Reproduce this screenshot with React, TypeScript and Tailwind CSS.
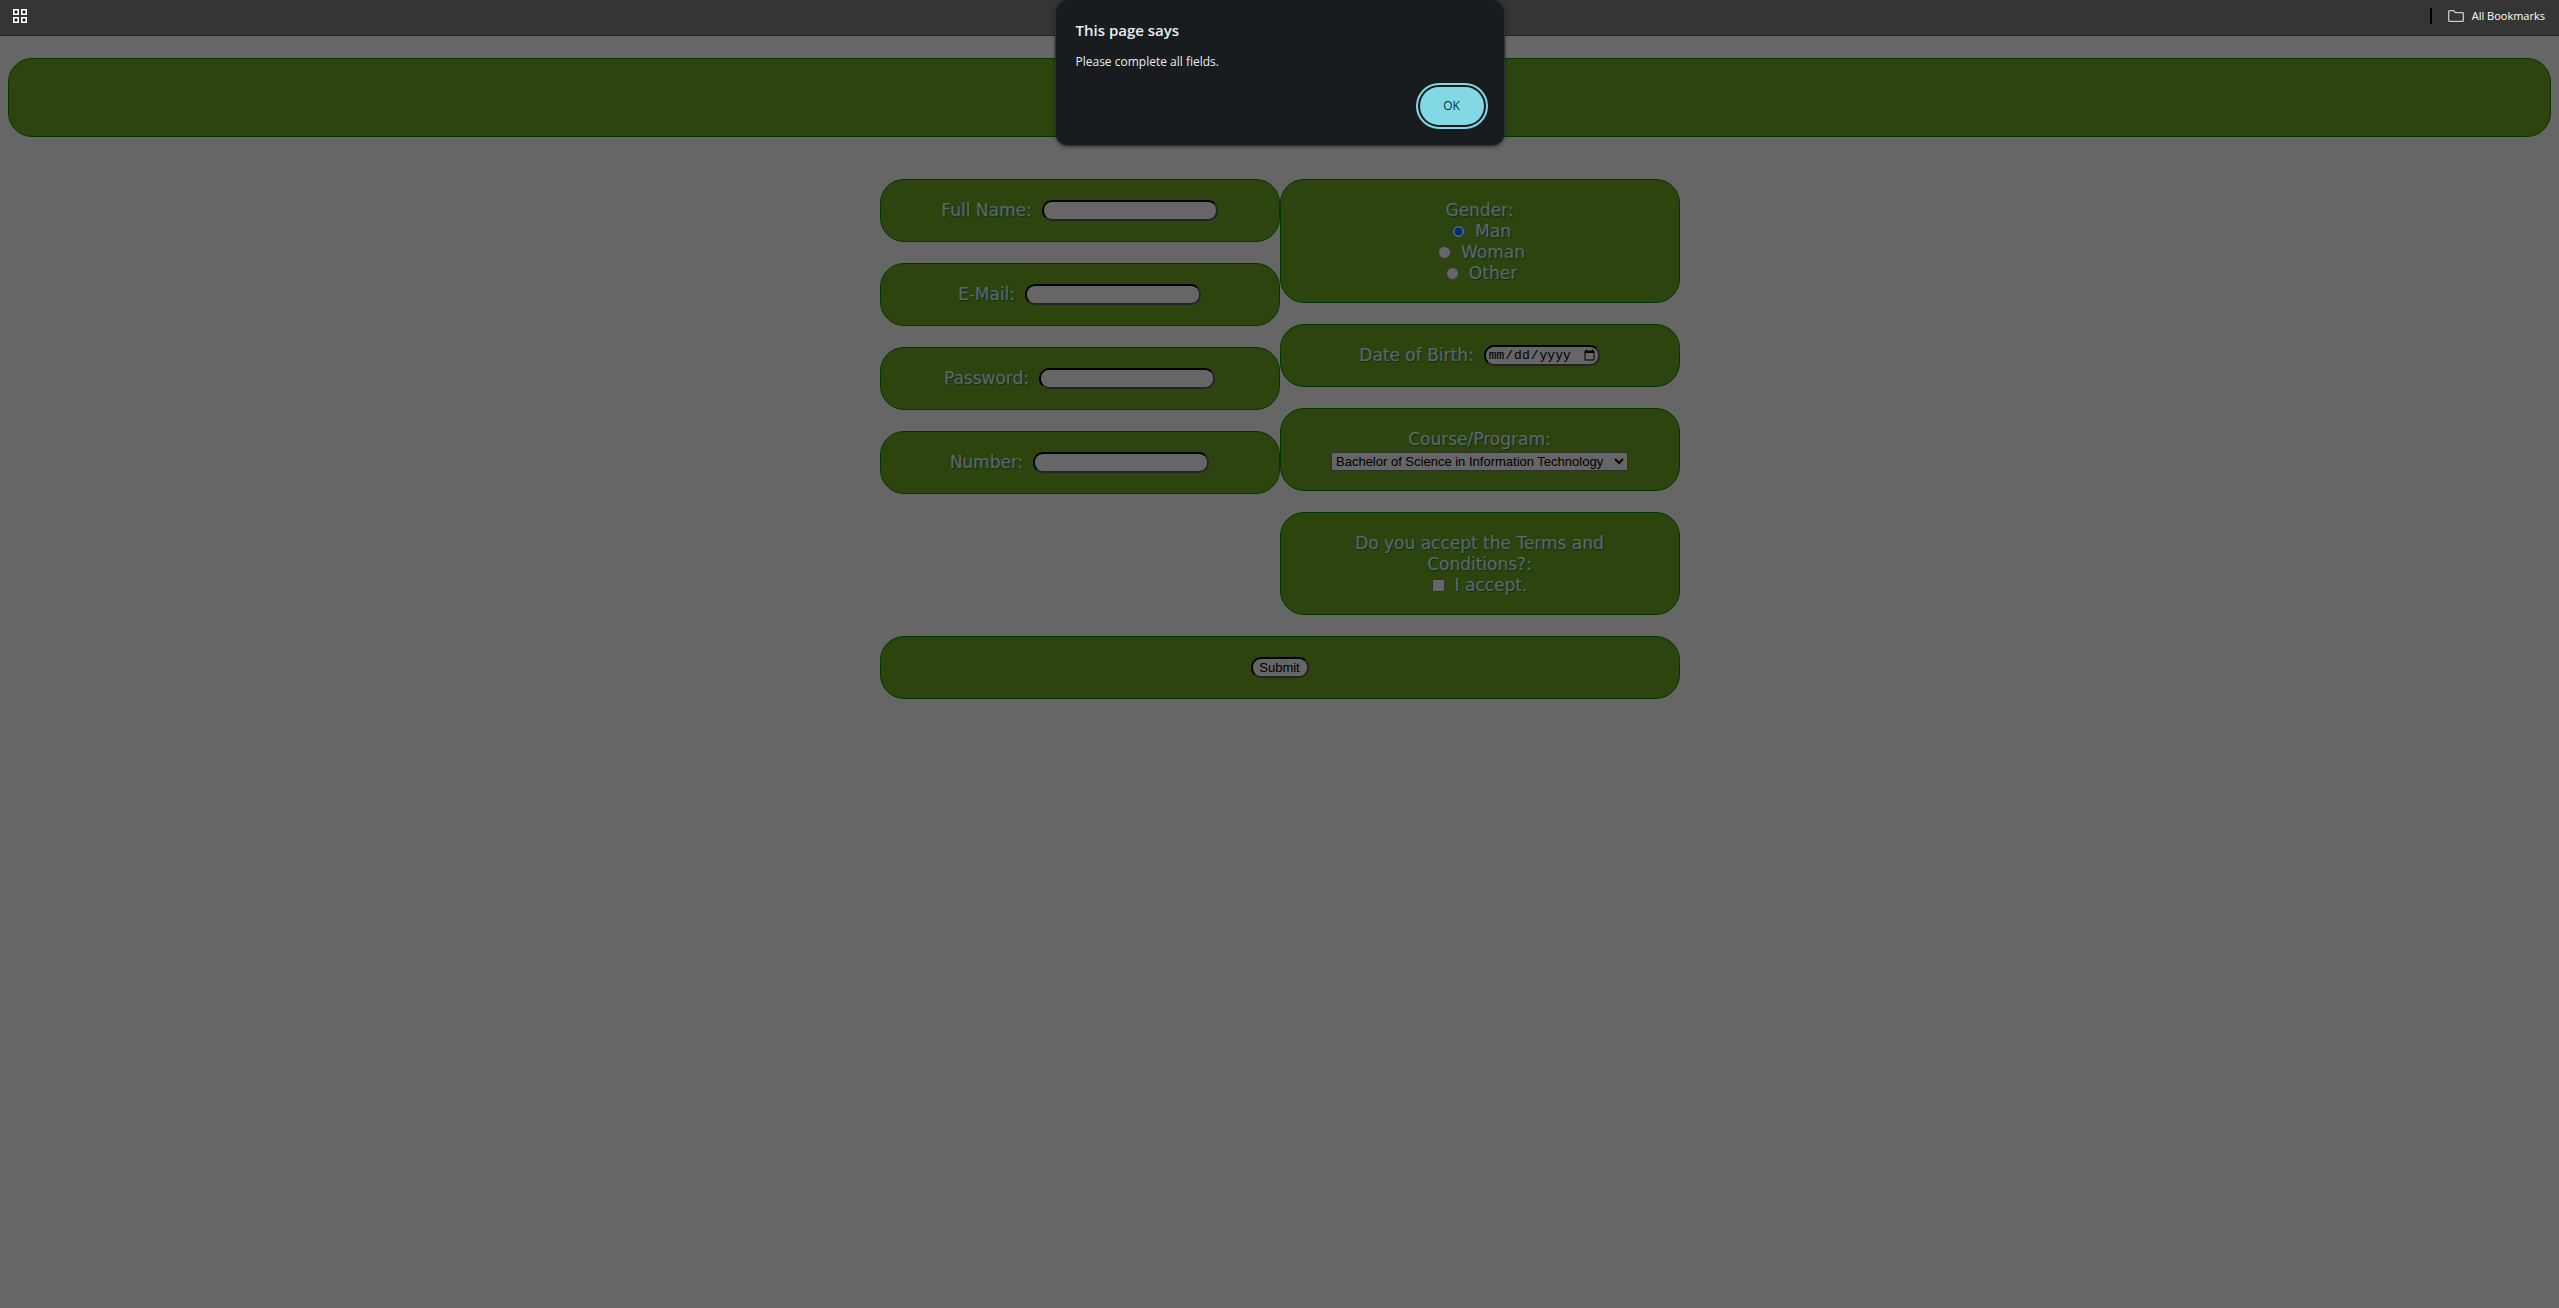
import type { ReactNode } from "react";

const courses = [
  "Bachelor of Science in Information Technology",
  "Bachelor of Science in Computer Science",
];

const cardBase =
  "border border-[#008c00] bg-[#73aa23] rounded-[24px] px-5 pt-5 text-center text-[17px] leading-[21px]";
const fieldBase =
  "border-2 border-t-black border-l-black border-b-[#5c5866] border-r-[#5c5866] rounded-[10px] bg-white text-black h-[21px]";

function Card({ children, tall = false }: { children?: ReactNode; tall?: boolean }) {
  return <div className={`${cardBase} ${tall ? "pb-[18px]" : "pb-5"}`}>{children}</div>;
}

function TextField({ id, label, type }: { id: string; label: string; type: string }) {
  return (
    <Card>
      <div className="flex items-center justify-center gap-2.5">
        <label htmlFor={id}>{label}</label>
        <input id={id} type={type} className={`${fieldBase} w-44 px-1 text-[13px]`} />
      </div>
    </Card>
  );
}

function Radio({ label, checked = false }: { label: string; checked?: boolean }) {
  return (
    <label className="flex items-center justify-center gap-2.5">
      <input type="radio" name="gender" defaultChecked={checked} className="ml-1 size-[13px]" />
      {label}
    </label>
  );
}

function BookmarksBar() {
  return (
    <div className="flex h-9 items-center justify-between border-b border-[#222] bg-[#353535] pr-[14px] pb-1 pl-[13px]">
      <button type="button" aria-label="Apps">
        <svg width="14" height="14" viewBox="0 0 14 14" fill="#111" stroke="#fff" strokeWidth="1.6">
          <rect x="0.8" y="0.8" width="4.4" height="4.4" />
          <rect x="8.8" y="0.8" width="4.4" height="4.4" />
          <rect x="0.8" y="8.8" width="4.4" height="4.4" />
          <rect x="8.8" y="8.8" width="4.4" height="4.4" />
        </svg>
      </button>
      <div className="flex items-center">
        <div className="mr-4 h-4 w-0.5 bg-black" />
        <button
          type="button"
          className="flex items-center gap-2 font-['Open_Sans','Noto_Sans',sans-serif] text-[11px] leading-4 font-medium text-white"
        >
          <svg width="16" height="12" viewBox="0 0 16 12" fill="none" stroke="#c8c8c8" strokeWidth="1.3">
            <path d="M.7 10.6V1.3Q.7.7 1.3.7H5.6L7.4 2.6H14.7Q15.3 2.6 15.3 3.2V10.7Q15.3 11.3 14.7 11.3H1.3Q.7 11.3.7 10.6Z" />
          </svg>
          All Bookmarks
        </button>
      </div>
    </div>
  );
}

export default function App() {
  return (
    <div className="flex min-h-screen flex-col bg-white">
      <BookmarksBar />
      <div className="relative grow px-2 pt-[22px] font-['Verdana','DejaVu_Sans',sans-serif] text-[#f4fbff] [text-shadow:1px_1px_1px_#00785a]">
        <header className="h-[79px] rounded-[24px] border border-[#008c00] bg-[#73aa23]" />
        <form className="mx-auto mt-[42px] max-w-[800px]" onSubmit={(e) => e.preventDefault()}>
          <div className="grid grid-cols-2">
            <div className="flex flex-col gap-[21px]">
              <TextField id="name" label="Full Name:" type="text" />
              <TextField id="email" label="E-Mail:" type="email" />
              <TextField id="password" label="Password:" type="password" />
              <TextField id="number" label="Number:" type="text" />
            </div>
            <div className="flex flex-col gap-[21px]">
              <Card tall>
                <div>Gender:</div>
                <Radio label="Man" checked />
                <Radio label="Woman" />
                <Radio label="Other" />
              </Card>
              <Card>
                <div className="flex items-center justify-center gap-2.5">
                  <label htmlFor="birth">Date of Birth:</label>
                  <input
                    id="birth"
                    type="date"
                    className={`${fieldBase} w-[116px] pl-0.5 font-['Liberation_Mono',monospace] text-[13px] text-shadow-none`}
                  />
                </div>
              </Card>
              <Card tall>
                <label htmlFor="course" className="block">
                  Course/Program:
                </label>
                <select
                  id="course"
                  className="mx-auto mt-0.5 mb-px block h-[19px] w-[297px] appearance-auto border border-[#767676] bg-white font-['Liberation_Sans',Arial,sans-serif] text-[13px] leading-4 text-black text-shadow-none"
                >
                  {courses.map((c) => (
                    <option key={c}>{c}</option>
                  ))}
                </select>
              </Card>
              <Card tall>
                <div className="mx-auto max-w-[300px]">Do you accept the Terms and Conditions?:</div>
                <label className="flex items-center justify-center gap-2.5">
                  <input type="checkbox" className="size-[13px]" />I accept.
                </label>
              </Card>
            </div>
          </div>
          <div className="mt-[21px]">
            <Card>
              <button
                type="submit"
                className={`${fieldBase} mx-auto block w-[58px] font-['Liberation_Sans',Arial,sans-serif] text-[13px] leading-4 text-shadow-none`}
              >
                Submit
              </button>
            </Card>
          </div>
        </form>
        <div className="absolute inset-0 bg-black/60" />
      </div>
      <div
        role="alertdialog"
        aria-labelledby="dialog-title"
        className="absolute top-0 left-1/2 w-[448px] -translate-x-1/2 rounded-xl bg-[#181c1e] px-5 pt-[18px] pb-5 font-['Open_Sans','Noto_Sans',sans-serif] text-[#e8ecee] shadow-[0_1px_4px_rgba(0,0,0,0.7)] ring-1 ring-[#2c3235]"
      >
        <h1 id="dialog-title" className="text-[15px] leading-6 font-semibold">
          This page says
        </h1>
        <p className="mt-2.5 text-[12px] leading-5">Please complete all fields.</p>
        <div className="mt-[15px] flex justify-end">
          <button
            type="button"
            className="h-[38px] w-16 rounded-full bg-[#82d8e4] text-[12px] font-medium text-[#0b3238] outline-2 outline-offset-2 outline-[#82d8e4]"
          >
            OK
          </button>
        </div>
      </div>
    </div>
  );
}
